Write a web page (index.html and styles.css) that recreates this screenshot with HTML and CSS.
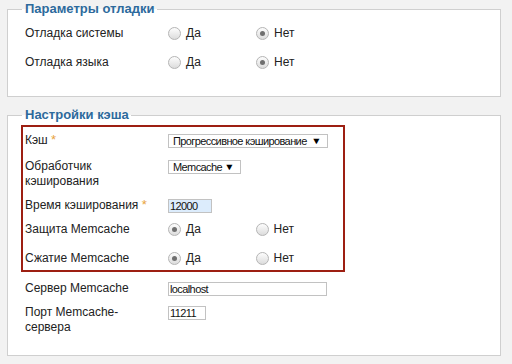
FILE: index.html
```
<!DOCTYPE html>
<html lang="ru">
<head>
<meta charset="UTF-8">
<title>Настройки</title>
<link rel="stylesheet" href="styles.css">
</head>
<body>

<!-- debug params -->
<fieldset class="panel panel-debug">
  <legend>Параметры отладки</legend>
  <div class="row row-radio">
    <label class="row-label">Отладка системы</label>
    <div class="choice"><span class="radio"></span>Да</div>
    <div class="choice"><span class="radio checked"></span>Нет</div>
  </div>
  <div class="row row-radio">
    <label class="row-label">Отладка языка</label>
    <div class="choice"><span class="radio"></span>Да</div>
    <div class="choice"><span class="radio checked"></span>Нет</div>
  </div>
</fieldset>

<!-- cache settings -->
<fieldset class="panel panel-cache">
  <legend>Настройки кэша</legend>
  <div class="highlight">
    <div class="row row-first">
      <label class="row-label">Кэш <span class="star">*</span></label>
      <span class="select select-wide">Прогрессивное кэширование<span class="arrow">▼</span></span>
    </div>
    <div class="row">
      <label class="row-label">Обработчик<br>кэширования</label>
      <span class="select select-short">Memcache<span class="arrow">▼</span></span>
    </div>
    <div class="row">
      <label class="row-label">Время кэширования <span class="star">*</span></label>
      <span class="field field-time">12000</span>
    </div>
    <div class="row row-radio">
      <label class="row-label">Защита Memcache</label>
      <div class="choice"><span class="radio checked"></span>Да</div>
      <div class="choice"><span class="radio"></span>Нет</div>
    </div>
    <div class="row row-last">
      <label class="row-label">Сжатие Memcache</label>
      <div class="choice"><span class="radio checked"></span>Да</div>
      <div class="choice"><span class="radio"></span>Нет</div>
    </div>
  </div>
  <div class="row row-plain">
    <label class="row-label">Сервер Memcache</label>
    <span class="field field-host">localhost</span>
  </div>
  <div class="row row-plain">
    <label class="row-label">Порт Memcache-<br>сервера</label>
    <span class="field field-port">11211</span>
  </div>
</fieldset>

</body>
</html>
```
FILE: styles.css
```
/* -------- BASE -------- */
*{box-sizing:border-box}
body{
  margin:0;
  padding:1px 0 0 7px;
  background:#f2f2f2;
  font-family:"Liberation Sans",Arial,sans-serif;
  font-size:12px;
  line-height:15px;
  color:#222;
}

/* -------- PANELS -------- */
.panel{
  width:494px;
  margin:0;
  border:1px solid #cfcfcf;
  background:#fff;
  padding:3px 10px 18px 14px;
}
.panel legend{
  padding:0 2px 0 3px;
  font-size:13px;
  font-weight:bold;
  line-height:16px;
  color:#2d6a9c;
}
.panel-cache{margin-top:10px;padding:0 10px 17px 14px}

/* -------- RED HIGHLIGHT BOX -------- */
.highlight{
  width:324px;
  margin:2px 0 3px -1px;
  padding:0 0 0 2px;
  border:2px solid #9d1f12;
}

/* -------- ROWS -------- */
.row{display:flex;align-items:flex-start;padding:6px 0 3px}
.row-first{padding-bottom:5px}
.row-radio{padding-bottom:8px}
.row-last{padding-bottom:4px}
.row-plain{padding-left:3px}
.panel-debug .row{padding-left:3px}
.row-label{width:143px;flex:none}
.star{color:#e8a33d;font-size:13px;line-height:0}

/* -------- RADIOS -------- */
.choice{display:flex;align-items:center;width:88px}
.radio{
  width:13px;height:13px;margin-right:5px;
  border:1px solid #b5b5b5;border-radius:50%;
  background:linear-gradient(#fdfdfd,#dcdcdc);
  position:relative;
}
.radio.checked::after{
  content:'';position:absolute;left:3px;top:3px;
  width:5px;height:5px;border-radius:50%;background:#6f6f6f;
}

/* -------- INPUTS -------- */
.select,.field{
  display:flex;align-items:center;
  height:14px;margin-top:1px;
  border:1px solid #c2c2c2;
  background:#fff;
  font-size:11px;letter-spacing:-.6px;line-height:12px;
  color:#111;
}
.select{padding:0 6px 0 4px;justify-content:space-between}
.select-wide{width:160px}
.select-short{width:73px}
.arrow{font-size:9px;letter-spacing:0;color:#000;transform:scaleX(1.15)}
.field{padding:0 1px}
.field-time{width:44px;background:#dcecfc}
.field-host{width:159px}
.field-port{width:38px}
```
